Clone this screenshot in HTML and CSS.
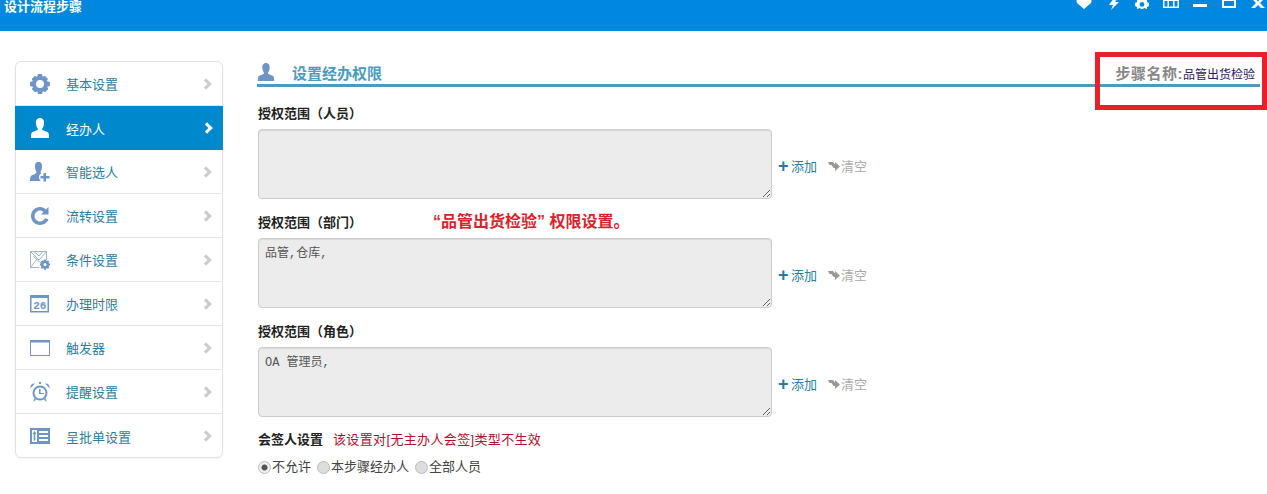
FILE: index.html
```html
<!DOCTYPE html>
<html lang="zh-CN">
<head>
  <meta charset="UTF-8" />
  <title>设计流程步骤</title>
  <link rel="stylesheet" href="styles.css">
</head>
<body>
  <header class="header">
    <div class="logo">设计流程步骤</div>
    <nav class="tools">
      <svg viewBox="0 0 16 12"><path d="M8 9L1 3Q0 1 1 -1L3 -3H6L8 -1L10 -3H13L15 -1Q16 1 15 3Z"/></svg>
      <svg viewBox="0 0 16 12"><path d="M9 -2H13L10 2H14L6 10L8 5H4Z"/></svg>
      <svg viewBox="0 0 16 12"><path fill-rule="evenodd" d="M3 -1H13V2L15 3V6L13 7V9L10 8L9 9H7L6 8L3 9V7L1 6V3L3 2ZM8 2A2.400 2.400 0 1 0 8 6.800A2.400 2.400 0 1 0 8 2Z"/></svg>
      <svg viewBox="0 0 16 12"><path fill-rule="evenodd" d="M0 -1H16V8H0ZM1.500 1V6.500H4.500V1ZM6 1V6.500H10V1ZM11.500 1V6.500H14.500V1Z"/></svg>
      <svg viewBox="0 0 16 12"><rect x="1" y="4" width="14" height="3"/></svg>
      <svg viewBox="0 0 16 12"><path fill-rule="evenodd" d="M1 -1H15V8H1ZM3 1V6H13V1Z"/></svg>
      <svg viewBox="0 0 16 12"><path d="M1 -2H5L8 1.500L11 -2H15L10 3L15 8H11L8 5L5 8H1L6 3Z"/></svg>
    </nav>
  </header>

  <div class="container">
    <ul class="menu">
      <li>
        <svg class="ico" viewBox="0 0 20 20"><path fill-rule="evenodd" d="M8 0H12L12.600 2.700L14.800 1.700L18 4.900L16.700 7L19.900 8V12L17.200 12.700L18.300 15L15.200 18.200L13 16.900L12 20H8L7.300 17.200L5 18.300L1.800 15.200L3.100 13L0 12V8L2.800 7.300L1.700 5L4.800 1.800L7 3.100ZM10 6A4 4 0 1 0 10 14A4 4 0 1 0 10 6Z"/></svg>
        <span>基本设置</span><i class="arrow"></i>
      </li>
      <li class="active">
        <svg class="ico" viewBox="0 0 20 20"><path d="M10 0C13 0 14.500 2.500 14 6C13.700 8.500 12.700 10 12 11C12.500 13 17 13 18.500 15C19 16 19 18 19 20H1C1 18 1 16 1.500 15C3 13 7.500 13 8 11C7.300 10 6.300 8.500 6 6C5.500 2.500 7 0 10 0Z"/></svg>
        <span>经办人</span><i class="arrow"></i>
      </li>
      <li>
        <svg class="ico" viewBox="0 0 20 20"><path d="M8.500 0C11 0 12.500 2 12 5.500C11.700 7.500 11 9 10.500 9.800C10.600 10.500 11 11 11.500 11.300C10 12 9 13.500 9 15C9 16.500 9.500 18 11 19H0C0 17 0 15 1 14C2.500 12.500 6 12.500 6.500 10C6 9 5.300 7.500 5 5.500C4.500 2 6 0 8.500 0Z"/><path d="M13.500 11H16V14H19.500V16.500H16V19.500H13.500V16.500H10.500V14H13.500Z"/></svg>
        <span>智能选人</span><i class="arrow"></i>
      </li>
      <li>
        <svg class="ico" viewBox="0 0 20 20"><path d="M10 1C12.500 1 14.500 2 16 3.500L18.500 1V8.500H11L13.500 6C12.500 5 11.300 4.500 10 4.500C7 4.500 4.500 7 4.500 10C4.500 13 7 15.500 10 15.500C12.300 15.500 14.200 14.200 15 12.300L18.500 13.300C17.200 16.700 13.900 19 10 19C5 19 1 15 1 10C1 5 5 1 10 1Z"/></svg>
        <span>流转设置</span><i class="arrow"></i>
      </li>
      <li>
        <svg class="ico" viewBox="0 0 20 20"><path class="line" d="M.5 1.500H16.500V10M9 17.500H.5V1.500M.5 1.500L9 10L16.500 1.500M.5 17.500L7 9M4 1.500L9 6L13 1.500M3 6L12 14"/><path fill-rule="evenodd" d="M14 9.500H16L16.300 11L18 10.400L19.300 11.700L18.500 13L20 13.700V15.500L18.500 16L19.300 17.600L18 18.800L16.400 18L16 19.800H14L13.500 18L12 18.800L10.700 17.500L11.500 16L10 15.500V13.700L11.500 13L10.700 11.600L12 10.400L13.500 11ZM15 13A1.500 1.500 0 1 0 15 16A1.500 1.500 0 1 0 15 13Z"/></svg>
        <span>条件设置</span><i class="arrow"></i>
      </li>
      <li>
        <svg class="ico" viewBox="0 0 20 20"><path fill-rule="evenodd" d="M0 1H19V18.500H0ZM1.500 4V17H17.500V4Z"/><text x="3.200" y="14.500" class="ico-num">26</text></svg>
        <span>办理时限</span><i class="arrow"></i>
      </li>
      <li>
        <svg class="ico" viewBox="0 0 20 20"><path fill-rule="evenodd" d="M0 2H20V18H0ZM1 4.500V17H19V4.500Z"/></svg>
        <span>触发器</span><i class="arrow"></i>
      </li>
      <li>
        <svg class="ico" viewBox="0 0 20 20"><path fill-rule="evenodd" d="M10 3.500A7.500 7.500 0 1 1 10 18.500A7.500 7.500 0 1 1 10 3.500ZM10 5.500A5.500 5.500 0 1 0 10 16.500A5.500 5.500 0 1 0 10 5.500Z"/><path d="M0.500 6C0 3.500 2 1 5 1.500ZM19.500 6C20 3.500 18 1 15 1.500ZM9 7H10.500V11H14V12H9ZM9 0H11V2H9ZM4 16L6 17.500L3.500 20ZM16 16L14 17.500L16.500 20Z"/></svg>
        <span>提醒设置</span><i class="arrow"></i>
      </li>
      <li>
        <svg class="ico" viewBox="0 0 20 20"><path fill-rule="evenodd" d="M0 2H20V18H0ZM2 4V16H7V4ZM9 5V7H18V5ZM9 9V11H18V9ZM9 13V15H18V13Z"/><path d="M4.500 5L6.500 8H5.300V14.500H3.700V8H2.500Z"/></svg>
        <span>呈批单设置</span><i class="arrow"></i>
      </li>
    </ul>

    <main class="main">
      <div class="title-bar">
        <svg class="title-ico" viewBox="0 0 20 20"><path d="M10 0C13 0 14.500 2.500 14 6C13.700 8.500 12.700 10 12 11C12.500 13 17 13 18.500 15C19 16 19 18 19 20H1C1 18 1 16 1.500 15C3 13 7.500 13 8 11C7.300 10 6.300 8.500 6 6C5.500 2.500 7 0 10 0Z"/></svg>
        <h3>设置经办权限</h3>
        <div class="step-name"><b>步骤名称:</b>品管出货检验</div>
      </div>

      <div class="field">
        <label>授权范围（人员）</label>
        <div class="field-row">
          <textarea readonly></textarea>
          <a class="btn-add"><em>+</em>添加</a>
          <a class="btn-clear"><svg viewBox="0 0 12 10"><path d="M0 1H5L7 3.500V1L12 5.500L7 10V7H5.500L3.500 4H1.500Z"/></svg>清空</a>
        </div>
      </div>

      <div class="field">
        <label>授权范围（部门）</label>
        <div class="field-row">
          <textarea readonly>品管,仓库,</textarea>
          <a class="btn-add"><em>+</em>添加</a>
          <a class="btn-clear"><svg viewBox="0 0 12 10"><path d="M0 1H5L7 3.500V1L12 5.500L7 10V7H5.500L3.500 4H1.500Z"/></svg>清空</a>
        </div>
      </div>

      <div class="field field-last">
        <label>授权范围（角色）</label>
        <div class="field-row">
          <textarea readonly>OA 管理员,</textarea>
          <a class="btn-add"><em>+</em>添加</a>
          <a class="btn-clear"><svg viewBox="0 0 12 10"><path d="M0 1H5L7 3.500V1L12 5.500L7 10V7H5.500L3.500 4H1.500Z"/></svg>清空</a>
        </div>
      </div>

      <div class="sign-row">
        <label>会签人设置</label>
        <span class="text-danger">该设置对[无主办人会签]类型不生效</span>
      </div>
      <div class="radio-row">
        <label><input type="radio" name="sign" checked>不允许</label>
        <label><input type="radio" name="sign">本步骤经办人</label>
        <label><input type="radio" name="sign">全部人员</label>
      </div>
    </main>
  </div>

  <!-- annotations drawn over the screenshot -->
  <div class="note">“品管出货检验” 权限设置。</div>
  <div class="red-box"></div>
</body>
</html>
```

FILE: styles.css
```css
* {
  box-sizing: border-box;
}

html, body {
  height: 100%;
  overflow: hidden;
}

body {
  margin: 0;
  position: relative;
  background: #fff;
  color: #333;
  font-family: "Liberation Sans", "Noto Sans CJK SC", sans-serif;
  font-size: 13px;
}

.header {
  height: 31px;
  background: #0087e0;
  display: flex;
  justify-content: space-between;
  padding-left: 4px;
  overflow: hidden;
}

.logo {
  color: #fff;
  font-size: 13px;
  font-weight: 700;
  line-height: 14px;
}

.tools {
  display: flex;
  gap: 13px;
  margin-right: 1px;
}

.tools svg {
  width: 16px;
  height: 12px;
  fill: #fff;
  overflow: hidden;
}

.container {
  display: flex;
  padding: 30px 7px 0 15px;
}

.menu {
  list-style: none;
  margin: 0;
  padding: 0;
  width: 208px;
  height: 397px;
  flex: none;
  border: 1px solid #e1e1e8;
  border-radius: 6px;
  box-shadow: 0 1px 2px rgba(0, 0, 0, 0.05);
}

.menu li {
  height: 44px;
  display: flex;
  align-items: center;
  padding-left: 14px;
  border-bottom: 1px solid #e5e5e5;
  color: #2a7f9e;
  font-size: 13px;
}

.menu li:last-child {
  border-bottom: none;
}

.menu li.active {
  margin: 0 -1px;
  padding-left: 15px;
  background: #0088cc;
  color: #fff;
  border-bottom: none;
}

.ico {
  width: 20px;
  height: 20px;
  margin-right: 16px;
  fill: #6f94c6;
  flex: none;
}

.active .ico {
  fill: #fff;
}

.ico .line {
  fill: none;
  stroke: #9db5d6;
  stroke-width: 1;
}

.ico-num {
  font-family: "Liberation Mono", monospace;
  font-size: 11px;
  font-weight: 700;
}

.arrow {
  margin-left: auto;
  margin-right: 12px;
  width: 8px;
  height: 8px;
  border-top: 3px solid #ccc;
  border-right: 3px solid #ccc;
  transform: rotate(45deg);
}

.active .arrow {
  border-color: #fff;
}

.main {
  flex: 1;
  margin-left: 34px;
}

.title-bar {
  height: 26px;
  display: flex;
  align-items: flex-start;
  border-bottom: 3px solid #4a9cbd;
  padding-right: 5px;
  margin-bottom: 21px;
}

.title-ico {
  width: 18px;
  height: 20px;
  margin: 1px 17px 0 0;
  fill: #6f94c6;
}

.title-bar h3 {
  margin: 0;
  padding-top: 3px;
  font-size: 15px;
  line-height: 20px;
  color: #4a9cbd;
}

.step-name {
  margin-left: auto;
  padding-top: 3px;
  font-size: 12px;
  line-height: 20px;
  color: #2c1a5e;
}

.step-name b {
  font-size: 15px;
  letter-spacing: 0.5px;
  color: #888;
}

.field {
  margin-bottom: 18px;
}

.field-last {
  margin-bottom: 14px;
}

.field label {
  display: block;
  padding-left: 1px;
  height: 21px;
  line-height: 12px;
  font-weight: 700;
  color: #222;
}

.field-row {
  display: flex;
  align-items: center;
  padding-left: 1px;
}

textarea {
  width: 514px;
  height: 70px;
  margin-right: 6px;
  padding: 5px 6px;
  background: #ececec;
  border: 1px solid #ccc;
  border-radius: 4px;
  box-shadow: inset 0 1px 1px rgba(0, 0, 0, 0.075);
  color: #555;
  font-family: "Liberation Mono", "Noto Sans CJK SC", monospace;
  font-size: 12px;
  line-height: 20px;
  outline: none;
}

.btn-add, .btn-clear {
  display: flex;
  align-items: center;
  padding-top: 3px;
  font-size: 13px;
}

.btn-add {
  color: #2a7f9e;
  margin-right: 11px;
}

.btn-add em {
  width: 13px;
  font-style: normal;
  font-weight: 700;
  font-size: 18px;
  line-height: 12px;
  color: #2a7a9e;
}

.btn-clear {
  color: #aaa;
}

.btn-clear svg {
  width: 12px;
  height: 10px;
  fill: #999;
  margin-right: 1px;
}

.sign-row {
  display: flex;
  gap: 10px;
  line-height: 18px;
  padding-left: 1px;
}

.sign-row label {
  font-weight: 700;
  color: #222;
}

.text-danger {
  letter-spacing: 0.35px;
  color: #b01030;
}

.radio-row {
  display: flex;
  gap: 5px;
  margin-top: 10px;
  line-height: 16px;
  color: #444;
}

.radio-row label {
  display: flex;
  align-items: center;
}

.radio-row input {
  appearance: none;
  width: 13px;
  height: 13px;
  margin: 0 1px 0 1px;
  border: 1px solid #bbb;
  border-radius: 50%;
  background: #ddd;
}

.radio-row input:checked {
  background: radial-gradient(circle, #555 0, #555 2.500px, #eee 3.500px);
}

.note {
  position: absolute;
  left: 433px;
  top: 212px;
  color: #d9232b;
  font-size: 16px;
  font-weight: 700;
  line-height: 20px;
}

.red-box {
  position: absolute;
  left: 1095px;
  top: 52px;
  width: 172px;
  height: 58px;
  border: 5px solid #e8202a;
}
```
